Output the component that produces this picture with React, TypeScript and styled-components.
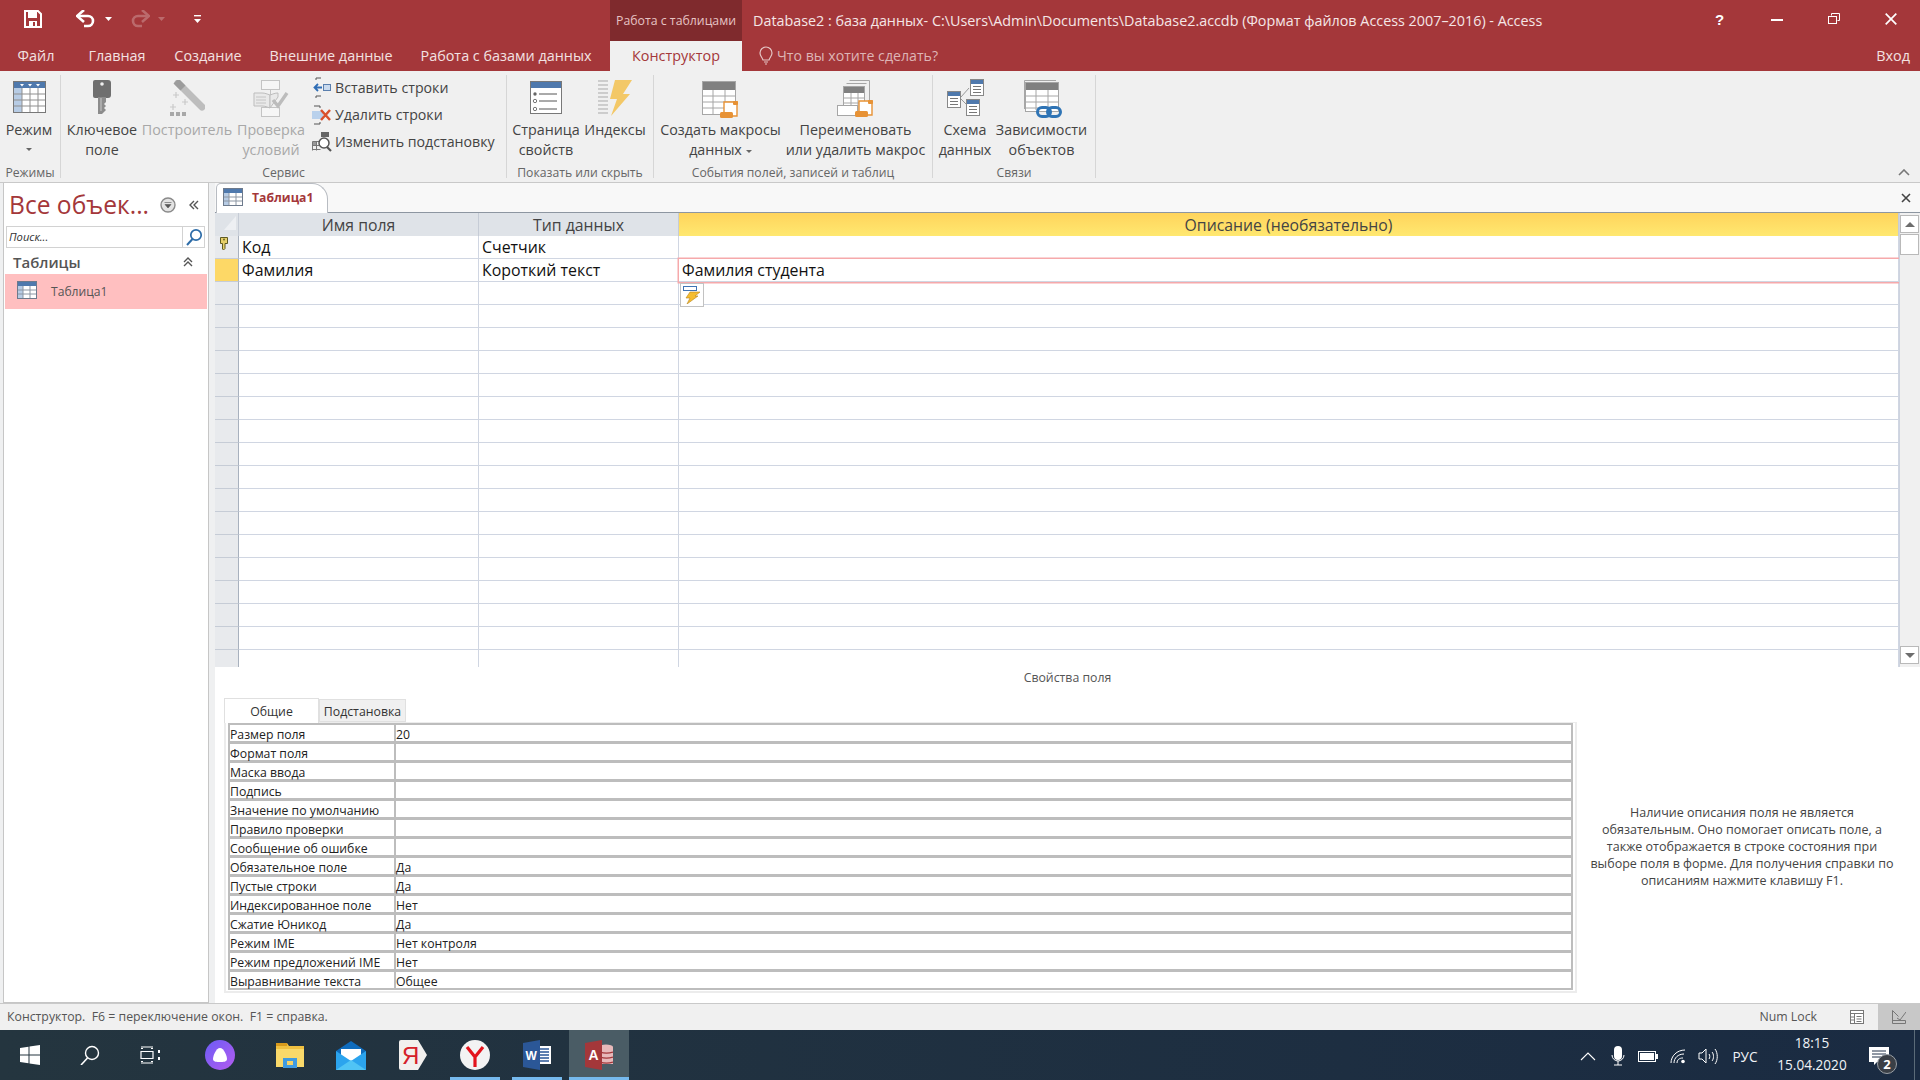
import React from "react";
import styled, { createGlobalStyle } from "styled-components";

const FONT = `"Open Sans", "Noto Sans", sans-serif`;
const RED = "#a4373a";

const Global = createGlobalStyle`
  html, body { margin: 0; padding: 0; overflow: hidden; background: #f0f0f0; }
  * { box-sizing: border-box; }
  svg { display: block; flex: none; }
`;

const Page = styled.div`
  width: 1920px; height: 1080px; display: flex; flex-direction: column; overflow: hidden;
  font-family: ${FONT}; color: #444; background: #f0f0f0;
`;

/* ---------- title bar ---------- */
const TitleBar = styled.div`
  height: 41px; display: flex; background: ${RED}; color: #f5e6e6; font-size: 14.35px;
`;
const Qat = styled.div`
  width: 610px; display: flex; align-items: center; padding-left: 24px; padding-bottom: 3px;
`;
const QatSlot = styled.div<{ $ml: number }>`
  margin-left: ${(p) => p.$ml}px;
`;
const ContextLabel = styled.div`
  width: 132px; background: #7f2a2d; color: #e6c3c4; font-size: 12.3px; display: flex;
  align-items: center; justify-content: center; padding-bottom: 1px; white-space: nowrap;
`;
const DocTitle = styled.div`
  flex: 1; padding-left: 11px; display: flex; align-items: center; white-space: nowrap;
`;
const WinButtons = styled.div`
  width: 229px; display: flex; margin-bottom: 3px;
`;
const WinButton = styled.div`
  flex: 1; display: flex; align-items: center; justify-content: center;
`;
const HelpMark = styled.span`
  font-family: "Liberation Sans", sans-serif; font-weight: 700; font-size: 15px; color: #fff;
`;

/* ---------- tabs ---------- */
const TabRow = styled.div`
  height: 30px; display: flex; align-items: stretch; background: ${RED}; color: #f3e2e2; font-size: 14.4px;
`;
const Tab = styled.div<{ $w: number }>`
  width: ${(p) => p.$w}px; display: flex; align-items: center; justify-content: center; white-space: nowrap;
  padding-bottom: 2px;
`;
const ActiveTab = styled(Tab)`
  background: #f0f0f0; color: ${RED}; margin-left: 6px;
`;
const HelpSearch = styled.div`
  margin-left: 17px; display: flex; align-items: center; gap: 4px; color: #deb5b6; white-space: nowrap;
  font-size: 14.15px; padding-bottom: 2px;
`;
const SignIn = styled.div`
  margin-left: auto; padding: 0 10px 2px 0; display: flex; align-items: center;
`;

/* ---------- ribbon ---------- */
const Ribbon = styled.div`
  height: 112px; display: flex; background: #f0f0f0; padding-top: 4px; border-bottom: 1px solid #c9c9c9;
`;
const Group = styled.div<{ $w: number }>`
  width: ${(p) => p.$w}px; height: 103px; border-right: 1px solid #d6d6d6; flex: none;
`;
const GroupBody = styled.div<{ $pl?: number; $gap?: number }>`
  height: 88px; display: flex; padding-left: ${(p) => p.$pl ?? 0}px; gap: ${(p) => p.$gap ?? 0}px;
`;
const GroupLabel = styled.div`
  height: 20px; line-height: 20px; text-align: center; font-size: 12.2px; color: #666; white-space: nowrap;
`;
const LargeButton = styled.div<{ $w: number; $off?: boolean }>`
  width: ${(p) => p.$w}px; flex: none; display: flex; flex-direction: column; align-items: center;
  font-size: 14.3px; line-height: 20px; text-align: center; white-space: nowrap;
  color: ${(p) => (p.$off ? "#a8a8a8" : "#444")};
`;
const IconBox = styled.div<{ $top?: number }>`
  height: 45px; display: flex; align-items: flex-start; justify-content: center; padding-top: ${(p) => p.$top ?? 5}px;
`;
const Caret = styled.span`
  display: inline-block; width: 0; height: 0; border: 3px solid transparent; border-top: 3.5px solid #666;
  border-bottom: 0; vertical-align: middle; margin-left: 4px;
`;
const BlockCaret = styled(Caret)`
  display: block; margin: 8px 0 0;
`;
const SmallColumn = styled.div`
  margin: -1px 0 0 2px; display: flex; flex-direction: column;
`;
const SmallRow = styled.div`
  height: 27px; display: flex; align-items: center; gap: 3px; font-size: 14.2px; white-space: nowrap;
`;
const SmallIcon = styled.div`
  width: 20px; display: flex; justify-content: center;
`;
const CollapseRibbon = styled.div`
  margin-left: auto; align-self: flex-end; padding: 0 10px 6px 0;
`;

/* ---------- main ---------- */
const Main = styled.div`
  height: 821px; display: flex; background: #eff0f1; padding-left: 3px; border-bottom: 1px solid #c9c9c9;
`;
const NavPane = styled.div`
  width: 206px; height: 820px; background: #fff; border: 1px solid #c6c6c6; border-top: 0; padding: 0 1px;
  display: flex; flex-direction: column; flex: none;
`;
const NavTitle = styled.div`
  height: 43px; display: flex; align-items: center; padding-left: 4px; color: ${RED};
  font-size: 24.6px; white-space: nowrap;
`;
const NavTitleText = styled.span`
  width: 151px; flex: none;
`;
const NavCollapse = styled.span`
  margin-left: 12px; color: #555; line-height: 1;
`;
const SearchBox = styled.div`
  height: 22px; margin-left: 1px; width: 199px; border: 1px solid #d2d2d2; display: flex; align-items: center;
  font-size: 11.2px; font-style: italic; color: #333; padding: 0 0 2px 2px;
`;
const SearchText = styled.span`
  flex: 1;
`;
const SearchBtn = styled.span`
  width: 22px; height: 20px; margin-bottom: -2px; border-left: 1px solid #d2d2d2; display: flex; align-items: center; justify-content: center;
`;
const NavGroup = styled.div`
  height: 26px; display: flex; align-items: center; justify-content: space-between; padding: 1px 13px 0 8px;
  font-size: 15px; font-weight: 600; color: #555;
`;
const NavItem = styled.div`
  height: 35px; background: #ffbfc0; display: flex; align-items: center; gap: 14px; padding: 0 0 0 12px;
  font-size: 12.1px; color: #555;
`;
const NavItemIcon = styled.div`
  margin-top: -3px;
`;
const NavGap = styled.div`
  width: 6px; flex: none;
`;
const Doc = styled.div`
  flex: 1; display: flex; flex-direction: column; background: #fff; min-width: 0;
`;
const DocTabs = styled.div`
  height: 30px; flex: none; background: #f8f8f8; border-bottom: 1px solid #8d96a1; display: flex; padding-left: 1px;
`;
const DocTab = styled.div`
  width: 112px; height: 30px; background: #fff; border: 1px solid #b8bcc2; border-bottom: 0;
  border-radius: 5px 16px 0 0; display: flex; align-items: center; gap: 9px; padding: 0 0 3px 6px;
  font-size: 12.2px; font-weight: 700; color: ${RED};
`;
const DocClose = styled.div`
  margin-left: auto; padding-right: 9px; align-self: center;
`;
const GridWrap = styled.div`
  height: 454px; flex: none; display: flex; position: relative;
`;
const Grid = styled.div`
  flex: 1; overflow: hidden; display: flex; flex-direction: column;
`;
const HeaderRow = styled.div`
  height: 23px; flex: none; display: grid; grid-template-columns: 24px 240px 200px 1fr;
`;
const HeadCell = styled.div<{ $sel?: boolean }>`
  background: ${(p) => (p.$sel ? "linear-gradient(#ffd45c, #ffe870)" : "#dfe3e8")};
  border-right: 1px solid #c6ccd6; display: flex; align-items: center; justify-content: center;
  font-size: 15.8px; color: #444; position: relative;
`;
const CornerMark = styled.svg`
  position: absolute; left: 9px; top: 3px;
`;
const Row = styled.div`
  height: 23px; flex: none; display: grid; grid-template-columns: 24px 240px 200px 1fr;
`;
const Selector = styled.div<{ $cur?: boolean }>`
  background: ${(p) => (p.$cur ? "#fdd866" : "#e8eaed")};
  border-right: 1px solid #a8b1be; border-bottom: 1px solid #c6ccd6; padding: 1px 0 0 5px;
`;
const Cell = styled.div<{ $focus?: boolean }>`
  border-right: 1px solid #d0d6e2; border-bottom: 1px solid #d0d6e2; padding-left: 3px; font-size: 15.9px; color: #111;
  display: flex; align-items: center; white-space: nowrap;
  ${(p) => p.$focus && "box-shadow: 0 0 0 1.5px #f6a9ab; position: relative;"}
`;
const SmartTag = styled.div`
  position: absolute; left: 465px; top: 70px; width: 24px; height: 24px; background: #fff;
  border: 1px solid #c2c2c2; display: flex; align-items: center; justify-content: center;
`;
const Scroll = styled.div`
  width: 21px; flex: none; background: #f0f0f0; border-left: 1px solid #cdd3df; padding: 2px 1px 3px 0;
  display: flex; flex-direction: column; align-items: flex-end;
`;
const ScrollBtn = styled.div`
  width: 19px; height: 18px; background: #fff; border: 1px solid #b9b9b9; display: flex; align-items: center; justify-content: center;
`;
const ScrollThumb = styled.div`
  width: 19px; height: 21px; background: #fff; border: 1px solid #b9b9b9; margin-top: 1px;
`;
const ScrollFill = styled.div`
  flex: 1;
`;
const PropsCaption = styled.div`
  height: 31px; flex: none; display: flex; align-items: flex-start; justify-content: center; padding-top: 2px;
  font-size: 12.3px; color: #555;
`;
const PropsArea = styled.div`
  flex: 1; display: flex; padding-left: 9px;
`;
const PropsLeft = styled.div`
  width: 1353px; flex: none;
`;
const PropTabs = styled.div`
  height: 24px; display: flex; align-items: flex-end;
`;
const PropTab = styled.div<{ $on?: boolean }>`
  width: ${(p) => (p.$on ? 95 : 87)}px; height: ${(p) => (p.$on ? 25 : 23)}px; display: flex; align-items: center;
  justify-content: center; font-size: 12.3px; color: #333;
  background: ${(p) => (p.$on ? "#fff" : "#f0f0f0")};
  padding-top: ${(p) => (p.$on ? 0 : 2)}px;
  border: 1px solid #e0e0e0; border-bottom: ${(p) => (p.$on ? "0" : "1px solid #e0e0e0")};
  margin-bottom: ${(p) => (p.$on ? "-1px" : "0")}; position: relative;
`;
const PropPanel = styled.div`
  height: 271px; border: 2px solid #ececec; border-top-width: 1px; padding: 0 2px;
`;
const PropTable = styled.div`
  background: #bdbdbd; padding: 2px; display: grid; grid-template-columns: 164px 1fr; gap: 3px 2px;
  grid-auto-rows: 16px;
`;
const PropCell = styled.div`
  background: #fff; font-size: 12.25px; line-height: 19px; height: 16px; color: #222; white-space: nowrap;
`;
const HelpText = styled.div`
  width: 320px; margin-left: 5px; display: flex; align-items: center; text-align: center; justify-content: center;
  font-size: 12.5px; line-height: 17px; color: #444; padding-bottom: 9px; white-space: nowrap;
`;

/* ---------- status + taskbar ---------- */
const StatusBar = styled.div`
  height: 26px; flex: none; display: flex; align-items: center; background: #f0f0f0; padding: 0 0 0 7px;
  font-size: 12.3px; color: #555; white-space: pre;
`;
const StatusText = styled.span`
  margin-top: -1px;
`;
const NumLock = styled.div`
  margin-left: auto; margin-right: 19px; margin-top: -1px; color: #555;
`;
const ViewBtn = styled.div<{ $on?: boolean }>`
  width: 42px; height: 26px; display: flex; align-items: center; justify-content: center;
  background: ${(p) => (p.$on ? "#c8c8c8" : "transparent")};
`;
const Taskbar = styled.div`
  height: 50px; flex: none; display: flex; background: linear-gradient(90deg, #24353f, #1a2b42); color: #f0f3f6;
`;
const TaskSlot = styled.div<{ $w: number; $open?: boolean; $active?: boolean; $ml?: number }>`
  width: ${(p) => p.$w}px; margin-left: ${(p) => p.$ml ?? 0}px; flex: none; display: flex; align-items: center;
  justify-content: center; position: relative; background: ${(p) => (p.$active ? "#4a5c65" : "transparent")};
  ${(p) =>
    p.$open &&
    `&::after { content: ""; position: absolute; bottom: 0; left: ${p.$active ? 0 : 6}px; right: ${p.$active ? 0 : 6}px; height: 3px; background: #76b9ed; }`}
`;
const Tray = styled.div`
  margin-left: auto; display: flex; align-items: stretch;
`;
const TraySlot = styled.div<{ $w: number }>`
  width: ${(p) => p.$w}px; display: flex; align-items: center; justify-content: center; position: relative;
  font-size: 13.6px; padding-top: 2px;
`;
const Clock = styled.div`
  width: 90px; display: flex; flex-direction: column; align-items: center; justify-content: center;
  font-size: 13.6px; line-height: 22px; padding-bottom: 2px;
`;
const ShowDesktop = styled.div`
  width: 6px; margin-left: 13px; border-left: 1px solid #5b6b78;
`;
const Badge = styled.div`
  position: absolute; left: 20px; top: 24px; width: 20px; height: 20px; border-radius: 50%; background: #3a3f46;
  border: 1px solid #9aa0a6; color: #fff; font-size: 13px; font-weight: 700; display: flex; align-items: center;
  justify-content: center; line-height: 1;
`;
const SvgLetter = styled.text`
  font-family: "Liberation Sans", sans-serif; font-weight: 700;
`;

/* ---------- icons ---------- */
const Save = () => (
  <svg width="18" height="18" viewBox="0 0 18 18">
    <path d="M1 1h13l3 3v13H1z" fill="none" stroke="#fff" strokeWidth="2" />
    <rect x="4" y="2" width="9" height="6" fill="#fff" />
    <rect x="5" y="11" width="8" height="6" fill="#fff" />
    <rect x="9" y="12" width="2" height="4" fill={RED} />
  </svg>
);
const Undo = ({ c = "#fff", flip }: { c?: string; flip?: boolean }) => (
  <svg width="20" height="18" viewBox="0 0 20 18" style={flip ? { transform: "scaleX(-1)" } : undefined}>
    <path d="M3 6h9a5 5 0 010 10H8" fill="none" stroke={c} strokeWidth="2.6" />
    <path d="M8 0L1 6l7 6" fill="none" stroke={c} strokeWidth="2.6" />
  </svg>
);
const TinyCaret = ({ c = "#fff" }: { c?: string }) => (
  <svg width="7" height="4" viewBox="0 0 7 4"><path d="M0 0h7L3.5 4z" fill={c} /></svg>
);
const QatMore = () => (
  <svg width="7" height="8" viewBox="0 0 7 8"><rect width="7" height="1.4" fill="#fff" /><path d="M0 4h7L3.5 8z" fill="#fff" /></svg>
);
const Datasheet = () => (
  <svg width="33" height="32" viewBox="0 0 33 32">
    <rect x=".5" y=".5" width="32" height="31" fill="#fff" stroke="#787878" />
    <rect x="1" y="1" width="31" height="6" fill="#4f79ad" />
    <path d="M7 3h4l-2 2.5zM15 3h4l-2 2.5zM23 3h4l-2 2.5z" fill="#fff" />
    <rect x="1" y="7" width="8" height="24" fill="#b7cce5" />
    <path d="M1 13h31M1 19h31M1 25h31M9 7v24M17 7v24M25 7v24" stroke="#8f8f8f" fill="none" />
  </svg>
);
const Key = () => (
  <svg width="20" height="35" viewBox="0 0 20 35">
    <path d="M2 0h13a3 3 0 013 3v12a3 3 0 01-3 3H2a2 2 0 01-2-2V2a2 2 0 012-2z" fill="#6f6f6f" transform="translate(1 0)" />
    <circle cx="10" cy="4" r="1.8" fill="#f0f0f0" />
    <path d="M6 17h8v5l-2 2 2 2-2 2 2 2-4 4H6z" fill="#8c8c8c" />
    <path d="M9 18v13" stroke="#bdbdbd" strokeWidth="1.3" />
  </svg>
);
const Builder = () => (
  <svg width="36" height="36" viewBox="0 0 36 36">
    <path d="M9 3l24 24" stroke="#bdbdbd" strokeWidth="7" strokeLinecap="round" />
    <path d="M7 1l7 7" stroke="#9c9c9c" strokeWidth="7" />
    <path d="M7 12v6M4 15h6M16 19v6M13 22h6M4 24v6M1 27h6" stroke="#cacaca" strokeWidth="1.2" />
    <path d="M1 32h4v4H1zM7 32h4v4H7zM13 32h4v4h-4z" fill="#a8a8a8" />
  </svg>
);
const Validation = () => (
  <svg width="36" height="37" viewBox="0 0 36 37">
    <rect x="8.5" y=".5" width="18" height="9" fill="#f6f6f6" stroke="#c4c4c4" />
    <rect x="8.5" y="27.5" width="18" height="9" fill="#f6f6f6" stroke="#c4c4c4" />
    <path d="M17.5 9v18" stroke="#c4c4c4" />
    <path d="M1 13h8c3 0 5 1 8 2v13c-3-1-5-2-8-2H1z" fill="#e9e9e9" stroke="#bdbdbd" />
    <path d="M17 15c3-1 5-2 8-2v4l-8 11z" fill="#e9e9e9" stroke="#bdbdbd" />
    <path d="M3 17h10M3 20h10M3 23h10" stroke="#c4c4c4" />
    <path d="M20 20l5 6 9-13" fill="none" stroke="#bcbcbc" strokeWidth="3.4" />
  </svg>
);
const InsertRows = () => (
  <svg width="18" height="22" viewBox="0 0 18 22">
    <path d="M3 3V1h5M3 21v-2h5" fill="none" stroke="#555" />
    <rect x="10.5" y="7.5" width="7" height="6" fill="#c9daee" stroke="#5a7fae" />
    <path d="M9 10.5H2M5 7l-3.500 3.500L5 14" fill="none" stroke="#2f6db5" strokeWidth="1.8" />
  </svg>
);
const DeleteRows = () => (
  <svg width="20" height="22" viewBox="0 0 20 22">
    <path d="M2 2h6v2M2 20h6v-2" fill="none" stroke="#555" />
    <rect x="0" y="7" width="11" height="8" fill="#b9d1ec" />
    <path d="M9 6l9 10M18 6l-9 10" stroke="#d9512c" strokeWidth="2.5" />
  </svg>
);
const Lookup = () => (
  <svg width="20" height="22" viewBox="0 0 20 22">
    <rect x="9" y="1" width="8" height="5" fill="#666" />
    <path d="M.5 10.500h9M.5 14.500h7M.5 18.500h8M.5 10.500v9M4.500 10.500v9" stroke="#777" fill="none" />
    <rect x="1" y="11" width="3" height="3" fill="#999" />
    <circle cx="12" cy="12" r="5" fill="#fff" stroke="#555" strokeWidth="1.5" />
    <path d="M15 16l4 4" stroke="#555" strokeWidth="2.2" />
  </svg>
);
const PropertySheet = () => (
  <svg width="32" height="33" viewBox="0 0 32 33">
    <rect x=".5" y=".5" width="31" height="32" fill="#fff" stroke="#787878" />
    <rect x="1" y="1" width="30" height="6" fill="#4f79ad" />
    <circle cx="5" cy="13" r="1.7" fill="#666" />
    <circle cx="5" cy="20" r="1.7" fill="none" stroke="#777" />
    <circle cx="5" cy="28" r="1.7" fill="none" stroke="#777" />
    <path d="M9 13h18M9 20h18M9 28h18" stroke="#555" />
  </svg>
);
const Indexes = () => (
  <svg width="34" height="36" viewBox="0 0 34 36">
    <path d="M0 1h10M0 5h10M0 9h10M0 13h10M0 17h10M0 21h10M0 25h10M0 29h10M0 33h10" stroke="#a9a9a9" />
    <path d="M17 0h17l-9 14h7L13 36l6-17h-7z" fill="#f3c867" />
  </svg>
);
const MacroTable = () => (
  <svg width="37" height="38" viewBox="0 0 37 38">
    <rect x=".5" y=".5" width="33" height="33" fill="#fff" stroke="#a6a6a6" />
    <rect x="1" y="1" width="32" height="8" fill="#808080" />
    <path d="M1 15h32M1 21h32M1 27h32M11 9v24M23 9v24" stroke="#a6a6a6" />
    <path d="M22 21h13v14H22z" fill="#fff" stroke="#e79235" strokeWidth="1.4" />
    <rect x="18" y="31" width="13" height="6" rx="1.5" fill="#e79235" />
    <rect x="31" y="20" width="5" height="4" rx="1" fill="#e79235" />
  </svg>
);
const MacroRename = () => (
  <svg width="38" height="39" viewBox="0 0 38 39">
    <path d="M12.500 1.500h20v24M9.500 4.500h20" fill="none" stroke="#a6a6a6" />
    <rect x="6.500" y="7.500" width="21" height="26" fill="#fff" stroke="#a6a6a6" />
    <rect x="7" y="8" width="20" height="6" fill="#808080" />
    <path d="M7 19h20M7 24h20M14 14v19M21 14v19" stroke="#a6a6a6" />
    <rect x=".5" y="26.500" width="20" height="10" fill="#fff" stroke="#a6a6a6" />
    <path d="M22 22h13v14H22z" fill="#fff" stroke="#e79235" strokeWidth="1.4" />
    <rect x="18" y="32" width="13" height="6" rx="1.5" fill="#e79235" />
    <rect x="31" y="21" width="5" height="4" rx="1" fill="#e79235" />
  </svg>
);
const MiniTable = ({ x, y, w, h }: { x: number; y: number; w: number; h: number }) => (
  <g transform={`translate(${x} ${y})`}>
    <rect x=".5" y=".5" width={w - 1} height={h - 1} fill="#fff" stroke="#888" />
    <rect x="1" y="1" width={w - 2} height="4" fill="#4f79ad" />
    <path d={`M3 7.500h${w - 6}M3 10.500h${w - 6}M3 13.500h${w - 6}`} stroke="#777" />
  </g>
);
const Schema = () => (
  <svg width="37" height="37" viewBox="0 0 37 37">
    <path d="M14 18l8-9M14 20l8 8" stroke="#999" fill="none" />
    <MiniTable x={23} y={0} w={14} h={17} />
    <MiniTable x={0} y={12} w={14} h={17} />
    <MiniTable x={19} y={20} w={14} h={17} />
  </svg>
);
const Dependencies = () => (
  <svg width="40" height="39" viewBox="0 0 40 39">
    <path d="M2.500 30V1.500H34" fill="none" stroke="#a6a6a6" />
    <rect x="3.500" y="3.500" width="33" height="29" fill="#fff" stroke="#a6a6a6" />
    <rect x="4" y="4" width="32" height="7" fill="#808080" />
    <path d="M4 17h32M4 23h32M4 29h32M14 11v20M26 11v20" stroke="#a6a6a6" />
    <rect x="15.500" y="28.500" width="13" height="9" rx="4.500" fill="none" stroke="#2f74b5" strokeWidth="3" />
    <rect x="25.500" y="28.500" width="13" height="9" rx="4.500" fill="none" stroke="#2f74b5" strokeWidth="3" />
  </svg>
);
const TableGlyph = ({ w = 20, h = 18 }: { w?: number; h?: number }) => (
  <svg width={w} height={h} viewBox="0 0 20 18">
    <rect x=".5" y=".5" width="19" height="17" fill="#fff" stroke="#6d7a8c" />
    <rect x="1" y="1" width="18" height="4" fill="#4f79ad" />
    <rect x="1" y="5" width="5" height="12" fill="#b7cce5" />
    <path d="M1 9h18M1 13h18M6 5v12M13 5v12" stroke="#8c96a3" />
  </svg>
);
const Chevrons = ({ up, left }: { up?: boolean; left?: boolean }) => (
  <svg width="12" height="12" viewBox="0 0 12 12" style={left ? { transform: "rotate(90deg)" } : undefined}>
    <path d={up ? "M2 6l4-4 4 4M2 10l4-4 4 4" : "M2 2l4 4 4-4M2 6l4 4 4-4"} fill="none" stroke="#555" strokeWidth="1.4" />
  </svg>
);
const NavMenu = () => (
  <svg width="16" height="16" viewBox="0 0 16 16">
    <circle cx="8" cy="8" r="7" fill="#e3e3e3" stroke="#8a8a8a" strokeWidth="1.4" />
    <path d="M4.500 5.500h7M5 7.500h6L8 11z" fill="#555" stroke="#555" strokeWidth=".6" />
  </svg>
);
const Magnifier = () => (
  <svg width="18" height="18" viewBox="0 0 18 18">
    <circle cx="11" cy="7" r="5.200" fill="none" stroke="#2d6ca8" strokeWidth="1.7" />
    <path d="M7.500 11L2 17" stroke="#2d6ca8" strokeWidth="2" />
  </svg>
);
const SmallKey = () => (
  <svg width="8" height="14" viewBox="0 0 8 14">
    <path d="M.5.500h7v6H5v5L3.500 13 2.500 12V6.500h-2z" fill="#e6d06a" stroke="#5e5a22" />
    <circle cx="4" cy="2.500" r=".9" fill="#5e5a22" />
  </svg>
);
const SmartTagIcon = () => (
  <svg width="18" height="18" viewBox="0 0 18 18">
    <rect x=".5" y=".5" width="13" height="4" fill="#fff" stroke="#3f74b5" />
    <path d="M7 6h10l-5 4h3L4 18l3-6H3z" fill="#f5bd31" stroke="#b9831a" strokeWidth=".6" />
  </svg>
);
const Bulb = () => (
  <svg width="14" height="19" viewBox="0 0 14 19">
    <path d="M7 1a6 6 0 00-6 6c0 3 2 4 3 7h6c1-3 3-4 3-7a6 6 0 00-6-6zM5 16h4M6 18h2" fill="none" stroke="#e5c6c6" strokeWidth="1.2" />
  </svg>
);
const CloseDoc = () => (
  <svg width="10" height="10" viewBox="0 0 10 10"><path d="M1 1l8 8M9 1l-8 8" stroke="#444" strokeWidth="1.6" /></svg>
);
const UpCaret = ({ down }: { down?: boolean }) => (
  <svg width="10" height="5" viewBox="0 0 10 5"><path d={down ? "M0 0h10L5 5z" : "M0 5h10L5 0z"} fill="#6d6d6d" /></svg>
);

const WinStart = () => (
  <svg width="20" height="20" viewBox="0 0 20 20"><path d="M0 3l8.500-1.300V9.500H0zM9.500 1.500L20 0v9.500H9.500zM0 10.500h8.500v7.800L0 17zM9.500 10.500H20V20L9.500 18.500z" fill="#fff" /></svg>
);
const SearchTask = () => (
  <svg width="20" height="20" viewBox="0 0 20 20"><circle cx="12" cy="8" r="6.500" fill="none" stroke="#fff" strokeWidth="1.400" /><path d="M7.500 13L1 20" stroke="#fff" strokeWidth="1.600" /></svg>
);
const TaskView = () => (
  <svg width="20" height="20" viewBox="0 0 20 20"><path d="M1 2h12M1 18h12M1 3.500h2M13 3.500h-2M1 6.500h12v7H1zM3 16.500H1M13 16.500h-2" fill="none" stroke="#fff" strokeWidth="1.200" /><path d="M18 5h2v3h-2zM18 12h2v3h-2z" fill="#fff" /></svg>
);
const Alice = () => (
  <svg width="30" height="30" viewBox="0 0 30 30">
    <defs><linearGradient id="al" x1="0" y1="0" x2="1" y2="1"><stop offset="0" stopColor="#6b5cf5" /><stop offset="1" stopColor="#b45cf0" /></linearGradient></defs>
    <circle cx="15" cy="15" r="15" fill="url(#al)" />
    <path d="M15 8c4 0 7 8 7 11 0 3-4 3-7 3s-7 0-7-3c0-3 3-11 7-11z" fill="#fff" />
  </svg>
);
const Explorer = () => (
  <svg width="28" height="28" viewBox="0 0 28 28">
    <path d="M0 2h11l2 3h15v21H0z" fill="#f0c040" />
    <rect x="0" y="2" width="11" height="3" fill="#d79a1c" />
    <path d="M0 8h28v18H0z" fill="#f9d96a" />
    <path d="M7 17h14v10H7z" fill="#3f9be0" />
    <rect x="11" y="20" width="6" height="4" fill="#f4d268" />
  </svg>
);
const Mail = () => (
  <svg width="30" height="30" viewBox="0 0 30 30">
    <path d="M15 1L0 11v19h30V11z" fill="#0f6cbd" />
    <path d="M5 9h20v13H5z" fill="#fff" />
    <path d="M0 11l15 10 15-10v19H0z" fill="#2ba4ee" />
    <path d="M0 30l15-10 15 10z" fill="#50c4f5" />
  </svg>
);
const YaTag = () => (
  <svg width="28" height="30" viewBox="0 0 28 30">
    <path d="M2 0h17l9 15-9 15H2a2 2 0 01-2-2V2a2 2 0 012-2z" fill="#f2f0ee" />
    <text x="3" y="24" fontFamily="Liberation Sans, sans-serif" fontSize="24" fill="#d5202a">Я</text>
  </svg>
);
const YaBrowser = () => (
  <svg width="30" height="30" viewBox="0 0 30 30">
    <circle cx="15" cy="15" r="15" fill="#f3f3f3" />
    <path d="M7 7l8 10 8-10M15 16v11" fill="none" stroke="#e3141d" strokeWidth="3.200" />
  </svg>
);
const WordIcon = () => (
  <svg width="28" height="30" viewBox="0 0 28 30">
    <path d="M15 6h13v18H15z" fill="#fff" />
    <path d="M17 9h9M17 12h9M17 15h9M17 18h9M17 21h9" stroke="#2b5797" strokeWidth="1.400" />
    <path d="M0 3l17-3v30L0 27z" fill="#2b5797" />
    <SvgLetter x="2.500" y="19.500" fontSize="12" fill="#fff">W</SvgLetter>
  </svg>
);
const AccessIcon = () => (
  <svg width="28" height="30" viewBox="0 0 28 30">
    <ellipse cx="21" cy="7" rx="7" ry="2.500" fill="#e8b9ba" />
    <path d="M14 7h14v17H14z" fill="#e8b9ba" />
    <path d="M15 12c4 1.400 9 1.400 13 0M15 17c4 1.400 9 1.400 13 0M15 22c4 1.400 9 1.400 13 0" stroke="#a4373a" strokeWidth="1.300" fill="none" />
    <path d="M0 3l17-3v30L0 27z" fill="#a4373a" />
    <SvgLetter x="3.500" y="20" fontSize="14" fill="#fff">A</SvgLetter>
  </svg>
);
const Mic = () => (
  <svg width="14" height="20" viewBox="0 0 14 20"><rect x="3" y="0" width="8" height="14" rx="4" fill="#fff" /><path d="M1 9a6 6 0 0012 0M7 15v4M3 19h8" fill="none" stroke="#fff" /></svg>
);
const Battery = () => (
  <svg width="20" height="11" viewBox="0 0 20 11"><rect x=".5" y=".5" width="17" height="10" fill="none" stroke="#fff" /><rect x="2" y="2" width="14" height="7" fill="#fff" /><rect x="18" y="3" width="2" height="5" fill="#fff" /></svg>
);
const Wifi = () => (
  <svg width="17" height="15" viewBox="0 0 17 15"><path d="M1 14C1 7 7 1 15 1M4 14c0-5 4-9 10-9M7 14c0-3 2-5 6-5" fill="none" stroke="#fff" strokeWidth="1" /><circle cx="13" cy="12.500" r="1.800" fill="#fff" /></svg>
);
const Speaker = () => (
  <svg width="20" height="17" viewBox="0 0 20 17"><path d="M1 5h3l4-4v14l-4-4H1zM11 6c1 1 1 4 0 5M14 4c2 2 2 7 0 9M17 1c3 4 3 11 0 15" fill="none" stroke="#fff" strokeWidth="1" /></svg>
);
const TrayUp = () => (
  <svg width="16" height="9" viewBox="0 0 16 9"><path d="M1 8l7-7 7 7" fill="none" stroke="#fff" strokeWidth="1.100" /></svg>
);
const Notify = () => (
  <svg width="20" height="18" viewBox="0 0 20 18"><path d="M0 0h20v15H8l-3 3v-3H0z" fill="#fff" /><path d="M3 4h14M3 7h14M3 10h10" stroke="#22324a" /></svg>
);
const ViewTable = () => (
  <svg width="14" height="14" viewBox="0 0 14 14"><rect x=".5" y=".5" width="13" height="13" fill="#fff" stroke="#777" /><path d="M1 3.500h12M4.500 4v9M6.500 6.500h5M6.500 9h5M6.500 11.500h5M1 7h3M1 10h3" stroke="#777" fill="none" /></svg>
);
const ViewDesign = () => (
  <svg width="14" height="14" viewBox="0 0 14 14"><path d="M.5 13.500V.5l6 6M.5 13.500h13v-3H.5" fill="none" stroke="#777" /><path d="M5 8l3 2 6-8" fill="none" stroke="#777" /></svg>
);
const WinClose = () => (
  <svg width="12" height="12" viewBox="0 0 12 12"><path d="M.7.700l10.600 10.600M11.300.700L.7 11.300" stroke="#fff" strokeWidth="1.700" /></svg>
);
const WinRestore = () => (
  <svg width="12" height="12" viewBox="0 0 12 12"><path d="M3.500 2.500V.5h8v7h-2" fill="none" stroke="#fff" /><rect x=".5" y="3.500" width="8" height="7" fill="none" stroke="#fff" /></svg>
);
const WinMin = () => (
  <svg width="12" height="4" viewBox="0 0 12 4"><rect width="12" height="2" y="2" fill="#fff" /></svg>
);

/* ---------- data ---------- */
const props: [string, string][] = [
  ["Размер поля", "20"], ["Формат поля", ""], ["Маска ввода", ""], ["Подпись", ""],
  ["Значение по умолчанию", ""], ["Правило проверки", ""], ["Сообщение об ошибке", ""],
  ["Обязательное поле", "Да"], ["Пустые строки", "Да"], ["Индексированное поле", "Нет"],
  ["Сжатие Юникод", "Да"], ["Режим IME", "Нет контроля"], ["Режим предложений IME", "Нет"],
  ["Выравнивание текста", "Общее"],
];
const gridRows = [
  { name: "Код", type: "Счетчик", desc: "", key: true },
  { name: "Фамилия", type: "Короткий текст", desc: "Фамилия студента", cur: true },
  ...Array.from({ length: 17 }, () => ({ name: "", type: "", desc: "" })),
] as { name: string; type: string; desc: string; key?: boolean; cur?: boolean }[];

export default function App() {
  return (
    <Page>
      <Global />
      <TitleBar>
        <Qat>
          <Save />
          <QatSlot $ml={34}><Undo /></QatSlot>
          <QatSlot $ml={9}><TinyCaret /></QatSlot>
          <QatSlot $ml={18}><Undo c="#bb6a6c" flip /></QatSlot>
          <QatSlot $ml={8}><TinyCaret c="#bb6a6c" /></QatSlot>
          <QatSlot $ml={29}><QatMore /></QatSlot>
        </Qat>
        <ContextLabel>Работа с таблицами</ContextLabel>
        <DocTitle>Database2 : база данных- C:\Users\Admin\Documents\Database2.accdb (Формат файлов Access 2007–2016) - Access</DocTitle>
        <WinButtons>
          <WinButton><HelpMark>?</HelpMark></WinButton>
          <WinButton><WinMin /></WinButton>
          <WinButton><WinRestore /></WinButton>
          <WinButton><WinClose /></WinButton>
        </WinButtons>
      </TitleBar>

      <TabRow>
        <Tab $w={72}>Файл</Tab>
        <Tab $w={90}>Главная</Tab>
        <Tab $w={92}>Создание</Tab>
        <Tab $w={154}>Внешние данные</Tab>
        <Tab $w={196}>Работа с базами данных</Tab>
        <ActiveTab $w={132}>Конструктор</ActiveTab>
        <HelpSearch><Bulb />Что вы хотите сделать?</HelpSearch>
        <SignIn>Вход</SignIn>
      </TabRow>

      <Ribbon>
        <Group $w={61}>
          <GroupBody>
            <LargeButton $w={58}>
              <IconBox $top={6}><Datasheet /></IconBox>
              Режим
              <BlockCaret />
            </LargeButton>
          </GroupBody>
          <GroupLabel>Режимы</GroupLabel>
        </Group>
        <Group $w={446}>
          <GroupBody $pl={6} $gap={5}>
            <LargeButton $w={70}><IconBox><Key /></IconBox>Ключевое<br />поле</LargeButton>
            <LargeButton $w={90} $off><IconBox><Builder /></IconBox>Построитель</LargeButton>
            <LargeButton $w={68} $off><IconBox><Validation /></IconBox>Проверка<br />условий</LargeButton>
            <SmallColumn>
              <SmallRow><SmallIcon><InsertRows /></SmallIcon>Вставить строки</SmallRow>
              <SmallRow><SmallIcon><DeleteRows /></SmallIcon>Удалить строки</SmallRow>
              <SmallRow><SmallIcon><Lookup /></SmallIcon>Изменить подстановку</SmallRow>
            </SmallColumn>
          </GroupBody>
          <GroupLabel>Сервис</GroupLabel>
        </Group>
        <Group $w={147}>
          <GroupBody $pl={6} $gap={6}>
            <LargeButton $w={66}><IconBox $top={6}><PropertySheet /></IconBox>Страница<br />свойств</LargeButton>
            <LargeButton $w={60}><IconBox><Indexes /></IconBox>Индексы</LargeButton>
          </GroupBody>
          <GroupLabel>Показать или скрыть</GroupLabel>
        </Group>
        <Group $w={279}>
          <GroupBody $pl={6} $gap={5}>
            <LargeButton $w={121}><IconBox $top={6}><MacroTable /></IconBox>Создать макросы<br /><span>данных<Caret /></span></LargeButton>
            <LargeButton $w={139}><IconBox $top={4}><MacroRename /></IconBox>Переименовать<br />или удалить макрос</LargeButton>
          </GroupBody>
          <GroupLabel>События полей, записей и таблиц</GroupLabel>
        </Group>
        <Group $w={163}>
          <GroupBody $pl={5} $gap={4}>
            <LargeButton $w={54}><IconBox $top={4}><Schema /></IconBox>Схема<br />данных</LargeButton>
            <LargeButton $w={91}><IconBox $top={4}><Dependencies /></IconBox>Зависимости<br />объектов</LargeButton>
          </GroupBody>
          <GroupLabel>Связи</GroupLabel>
        </Group>
        <CollapseRibbon>
          <svg width="12" height="7" viewBox="0 0 12 7"><path d="M1 6l5-5 5 5" fill="none" stroke="#777" strokeWidth="1.600" /></svg>
        </CollapseRibbon>
      </Ribbon>

      <Main>
        <NavPane>
          <NavTitle>
            <NavTitleText>Все объек...</NavTitleText>
            <NavMenu />
            <NavCollapse><Chevrons left /></NavCollapse>
          </NavTitle>
          <SearchBox>
            <SearchText>Поиск...</SearchText>
            <SearchBtn><Magnifier /></SearchBtn>
          </SearchBox>
          <NavGroup>Таблицы<Chevrons up /></NavGroup>
          <NavItem><NavItemIcon><TableGlyph /></NavItemIcon>Таблица1</NavItem>
        </NavPane>
        <NavGap />
        <Doc>
          <DocTabs>
            <DocTab><TableGlyph />Таблица1</DocTab>
            <DocClose><CloseDoc /></DocClose>
          </DocTabs>
          <GridWrap>
            <Grid>
              <HeaderRow>
                <HeadCell>
                  <CornerMark width="12" height="14" viewBox="0 0 12 14"><path d="M12 0v14H0z" fill="#eef0f3" /></CornerMark>
                </HeadCell>
                <HeadCell>Имя поля</HeadCell>
                <HeadCell>Тип данных</HeadCell>
                <HeadCell $sel>Описание (необязательно)</HeadCell>
              </HeaderRow>
              {gridRows.map((r, i) => (
                <Row key={i}>
                  <Selector $cur={r.cur}>{r.key && <SmallKey />}</Selector>
                  <Cell>{r.name}</Cell>
                  <Cell>{r.type}</Cell>
                  <Cell $focus={r.cur}>{r.desc}</Cell>
                </Row>
              ))}
            </Grid>
            <SmartTag><SmartTagIcon /></SmartTag>
            <Scroll>
              <ScrollBtn><UpCaret /></ScrollBtn>
              <ScrollThumb />
              <ScrollFill />
              <ScrollBtn><UpCaret down /></ScrollBtn>
            </Scroll>
          </GridWrap>
          <PropsCaption>Свойства поля</PropsCaption>
          <PropsArea>
            <PropsLeft>
              <PropTabs>
                <PropTab $on>Общие</PropTab>
                <PropTab>Подстановка</PropTab>
              </PropTabs>
              <PropPanel>
                <PropTable>
                  {props.map(([k, v]) => (
                    <React.Fragment key={k}>
                      <PropCell>{k}</PropCell>
                      <PropCell>{v}</PropCell>
                    </React.Fragment>
                  ))}
                </PropTable>
              </PropPanel>
            </PropsLeft>
            <HelpText>
              <span>
                Наличие описания поля не является<br />
                обязательным. Оно помогает описать поле, а<br />
                также отображается в строке состояния при<br />
                выборе поля в форме. Для получения справки по<br />
                описаниям нажмите клавишу F1.
              </span>
            </HelpText>
          </PropsArea>
        </Doc>
      </Main>

      <StatusBar>
        <StatusText>{"Конструктор.  F6 = переключение окон.  F1 = справка."}</StatusText>
        <NumLock>Num Lock</NumLock>
        <ViewBtn><ViewTable /></ViewBtn>
        <ViewBtn $on><ViewDesign /></ViewBtn>
      </StatusBar>

      <Taskbar>
        <TaskSlot $w={60}><WinStart /></TaskSlot>
        <TaskSlot $w={60}><SearchTask /></TaskSlot>
        <TaskSlot $w={60}><TaskView /></TaskSlot>
        <TaskSlot $w={80}><Alice /></TaskSlot>
        <TaskSlot $w={60}><Explorer /></TaskSlot>
        <TaskSlot $w={62}><Mail /></TaskSlot>
        <TaskSlot $w={62}><YaTag /></TaskSlot>
        <TaskSlot $w={62} $open><YaBrowser /></TaskSlot>
        <TaskSlot $w={62} $open><WordIcon /></TaskSlot>
        <TaskSlot $w={60} $ml={1} $open $active><AccessIcon /></TaskSlot>
        <Tray>
          <TraySlot $w={30}><TrayUp /></TraySlot>
          <TraySlot $w={30}><Mic /></TraySlot>
          <TraySlot $w={30}><Battery /></TraySlot>
          <TraySlot $w={30}><Wifi /></TraySlot>
          <TraySlot $w={30}><Speaker /></TraySlot>
          <TraySlot $w={44}>РУС</TraySlot>
          <Clock><span>18:15</span><span>15.04.2020</span></Clock>
          <TraySlot $w={44}><Notify /><Badge>2</Badge></TraySlot>
          <ShowDesktop />
        </Tray>
      </Taskbar>
    </Page>
  );
}
